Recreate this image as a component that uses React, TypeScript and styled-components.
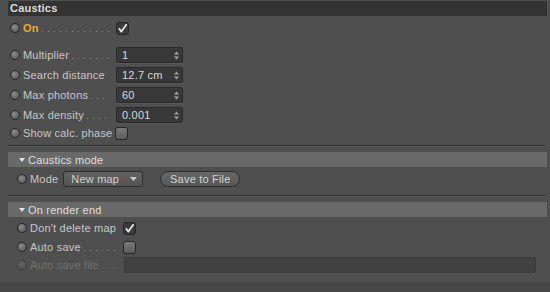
import React from 'react';
import styled, { createGlobalStyle } from 'styled-components';

const Global = createGlobalStyle`
  html, body { margin: 0; padding: 0; background: #4f4f4f; }
  body { font-family: "Liberation Sans", Arial, sans-serif; font-size: 11px; }
`;

const Page = styled.div`
  width: 550px;
  height: 292px;
  display: flex;
  flex-direction: column;
  background: #4f4f4f;
  overflow: hidden;
`;

const Panel = styled.div`
  flex: 1;
  padding: 1px 3px 0 8px;
  display: flex;
  flex-direction: column;
`;

const Footer = styled.div`
  height: 10px;
  background: #474747;
`;

const TitleBar = styled.div`
  height: 15px;
  line-height: 15px;
  background: #333333;
  color: #dcdcdc;
  font-weight: bold;
  padding-left: 2px;
  letter-spacing: 0.2px;
`;

const Row = styled.div<{ $h?: number; $mt?: number; $indent?: number }>`
  display: flex;
  align-items: center;
  height: ${(p) => p.$h ?? 20}px;
  margin-top: ${(p) => p.$mt ?? 0}px;
  padding-left: ${(p) => p.$indent ?? 2}px;
  color: #c6c6c6;
  letter-spacing: 0.2px;
`;

const Radio = styled.span<{ $disabled?: boolean }>`
  flex: none;
  width: 10px;
  height: 10px;
  box-sizing: border-box;
  border-radius: 50%;
  border: 1px solid #262626;
  background: radial-gradient(circle at 40% 35%, #8c8c8c, #606060 70%);
  margin-right: 3px;
  opacity: ${(p) => (p.$disabled ? 0.35 : 1)};
`;

const LabelCell = styled.span`
  flex: none;
  width: 93px;
  display: flex;
  align-items: center;
  white-space: nowrap;
`;

const LabelText = styled.span<{ $on?: boolean; $dim?: boolean }>`
  color: ${(p) => (p.$on ? '#f2a531' : p.$dim ? '#6f6f6f' : '#c6c6c6')};
  font-weight: ${(p) => (p.$on ? 'bold' : 'normal')};
`;

const Leader = styled.span<{ $dim?: boolean }>`
  flex: 1;
  height: 1px;
  margin: 7px 7px 0 3px;
  background-image: linear-gradient(
    to right,
    ${(p) => (p.$dim ? '#656565' : '#8e8e8e')} 1px,
    transparent 1px
  );
  background-size: 6px 1px;
  background-repeat: repeat-x;
`;

const Check = styled.span<{ $checked?: boolean; $ml?: number }>`
  flex: none;
  width: 13px;
  height: 13px;
  box-sizing: border-box;
  border-radius: 3px;
  border: 1px solid #262626;
  margin-left: ${(p) => p.$ml ?? 0}px;
  background: ${(p) =>
    p.$checked ? '#3b3b3b' : 'linear-gradient(#7a7a7a, #5b5b5b)'};
  display: flex;
  align-items: center;
  justify-content: center;
`;

const NumField = styled.div`
  flex: none;
  width: 67px;
  height: 16px;
  box-sizing: border-box;
  background: #383838;
  border: 1px solid #2a2a2a;
  border-radius: 2px;
  box-shadow: 0 1px 0 #595959;
  display: flex;
  align-items: center;
  padding: 0 3px 0 5px;
  color: #d8d8d8;
`;

const FieldText = styled.span`
  flex: 1;
`;

const LongField = styled.div`
  flex: none;
  width: 412px;
  height: 16px;
  box-sizing: border-box;
  margin-left: 1px;
  background: #414141;
  border: 1px solid #3a3a3a;
  border-radius: 2px;
  box-shadow: 0 1px 0 #555;
`;

const Divider = styled.div<{ $mt: number }>`
  height: 1px;
  margin: ${(p) => p.$mt}px 2px 0 0;
  background: #2e2e2e;
  border-bottom: 1px solid #5b5b5b;
`;

const GroupHeader = styled.div<{ $mt: number }>`
  height: 15px;
  margin-top: ${(p) => p.$mt}px;
  background: #696969;
  display: flex;
  align-items: center;
  padding-left: 11px;
  color: #dedede;
  letter-spacing: 0.2px;
`;

const Triangle = styled.span`
  width: 0;
  height: 0;
  border-left: 3.5px solid transparent;
  border-right: 3.5px solid transparent;
  border-top: 4px solid #e6e6e6;
  margin-right: 3px;
`;

const ModeLabel = styled.span`
  margin-right: 5px;
`;

const Dropdown = styled.div`
  flex: none;
  width: 80px;
  height: 16px;
  box-sizing: border-box;
  border: 1px solid #2c2c2c;
  border-radius: 3px;
  background: linear-gradient(#626262, #555555);
  display: flex;
  align-items: center;
  padding: 0 5px 0 7px;
  color: #d0d0d0;
`;

const PillButton = styled.div`
  flex: none;
  width: 80px;
  height: 16px;
  box-sizing: border-box;
  margin-left: 17px;
  border: 1px solid #2c2c2c;
  border-radius: 8px;
  background: linear-gradient(#676767, #575757);
  display: flex;
  align-items: center;
  justify-content: center;
  color: #d2d2d2;
`;

const Spinner = () => (
  <svg width="5" height="9" viewBox="0 0 5 9">
    <polygon points="0,3.5 2.5,0.5 5,3.5" fill="#a2a2a2" />
    <polygon points="0,5.5 5,5.5 2.5,8.5" fill="#a2a2a2" />
  </svg>
);

const CheckMark = () => (
  <svg width="11" height="11" viewBox="0 0 11 11">
    <path d="M2.2 5.8 L4.4 8.6 L9.2 1.8" fill="none" stroke="#ececec" strokeWidth="1.7" strokeLinecap="round" strokeLinejoin="round" />
  </svg>
);

const DownArrow = () => (
  <svg width="7" height="4" viewBox="0 0 7 4">
    <polygon points="0,0 7,0 3.5,4" fill="#cfcfcf" />
  </svg>
);

type NumRow = { label: string; value: string; leader: boolean };
const numRows: NumRow[] = [
  { label: 'Multiplier', value: '1', leader: true },
  { label: 'Search distance', value: '12.7 cm', leader: false },
  { label: 'Max photons', value: '60', leader: true },
  { label: 'Max density', value: '0.001', leader: true },
];

export default function App() {
  return (
    <Page>
      <Global />
      <Panel>
        <TitleBar>Caustics</TitleBar>
        <Row $mt={2}>
          <Radio />
          <LabelCell>
            <LabelText $on>On</LabelText>
            <Leader />
          </LabelCell>
          <Check $checked>
            <CheckMark />
          </Check>
        </Row>
        {numRows.map((r, i) => (
          <Row key={r.label} $mt={i === 0 ? 7 : 0}>
            <Radio />
            <LabelCell>
              <LabelText>{r.label}</LabelText>
              {r.leader && <Leader />}
            </LabelCell>
            <NumField>
              <FieldText>{r.value}</FieldText>
              <Spinner />
            </NumField>
          </Row>
        ))}
        <Row $h={18} $mt={-1}>
          <Radio />
          <LabelCell>
            <LabelText>Show calc. phase</LabelText>
          </LabelCell>
          <Check $ml={-1} />
        </Row>
        <Divider $mt={3} />
        <GroupHeader $mt={5}>
          <Triangle />
          Caustics mode
        </GroupHeader>
        <Row $h={18} $mt={3} $indent={9}>
          <Radio />
          <ModeLabel>Mode</ModeLabel>
          <Dropdown>
            <FieldText>New map</FieldText>
            <DownArrow />
          </Dropdown>
          <PillButton>Save to File</PillButton>
        </Row>
        <Divider $mt={7} />
        <GroupHeader $mt={5}>
          <Triangle />
          On render end
        </GroupHeader>
        <Row $h={18} $mt={2} $indent={9}>
          <Radio />
          <LabelCell>
            <LabelText>Don't delete map</LabelText>
          </LabelCell>
          <Check $checked>
            <CheckMark />
          </Check>
        </Row>
        <Row $h={18} $mt={1} $indent={9}>
          <Radio />
          <LabelCell>
            <LabelText>Auto save</LabelText>
            <Leader />
          </LabelCell>
          <Check />
        </Row>
        <Row $h={18} $indent={9}>
          <Radio $disabled />
          <LabelCell>
            <LabelText $dim>Auto save file</LabelText>
            <Leader $dim />
          </LabelCell>
          <LongField />
        </Row>
      </Panel>
      <Footer />
    </Page>
  );
}
